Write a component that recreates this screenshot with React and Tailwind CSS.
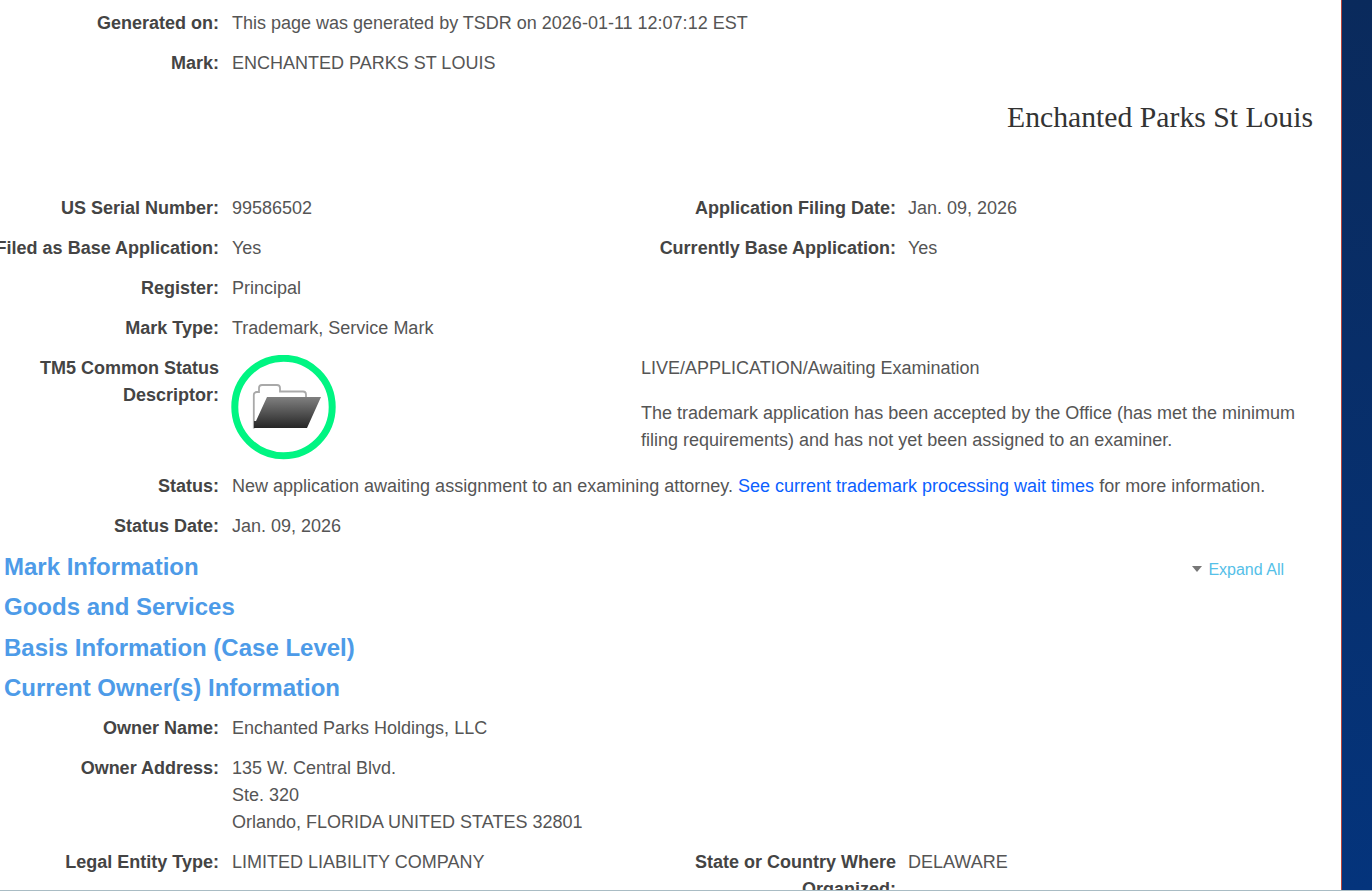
import React from 'react';

function Label({ children }) {
  return (
    <div className="w-[219px] shrink-0 flex justify-end text-right font-bold text-[#444444] whitespace-nowrap">
      <span>{children}</span>
    </div>
  );
}

function Row({ label, children, className = 'mb-[13px]' }) {
  return (
    <div className={`flex ${className}`}>
      <Label>{label}</Label>
      <div className="ml-[13px]">{children}</div>
    </div>
  );
}

function TwoCol({ label, value, label2, value2, wrap2 }) {
  return (
    <div className="flex mb-[13px]">
      <Label>{label}</Label>
      <div className="ml-[13px] w-[419px] shrink-0">{value}</div>
      <div className={`w-[245px] shrink-0 text-right font-bold text-[#444444] ${wrap2 ? '' : 'whitespace-nowrap'}`}>{label2}</div>
      <div className="ml-[12px]">{value2}</div>
    </div>
  );
}

function SectionTitle({ children, right }) {
  return (
    <div className="flex items-center justify-between h-[27px] mb-[13.33px] pl-1">
      <h2 className="text-[24px] font-bold text-[#4d9be8] leading-[27px]">{children}</h2>
      {right}
    </div>
  );
}

function StatusIcon() {
  return (
    <svg width="105" height="105" viewBox="0 0 105 105" className="block">
      <defs>
        <linearGradient id="folderFront" x1="0" y1="0" x2="0" y2="1">
          <stop offset="0" stopColor="#808080" />
          <stop offset="1" stopColor="#262626" />
        </linearGradient>
      </defs>
      <circle cx="52.5" cy="52" r="48.700" fill="none" stroke="#00f582" strokeWidth="7" />
      <path d="M22.800 73.500V40a3 3 0 0 1 3-3h2.200v-4a3 3 0 0 1 3-3h15a3 3 0 0 1 3 3v3.500h23a3 3 0 0 1 3 3V43" fill="none" stroke="#a9a9a9" strokeWidth="1.800" />
      <path d="M36 42h54L76 73H23v-7h2z" fill="url(#folderFront)" />
    </svg>
  );
}

export default function App() {
  return (
    <div className="w-[1372px] h-[891px] overflow-hidden bg-white border-b border-[#a9bcc4] font-['Liberation_Sans',Arial,sans-serif] text-[18px] leading-[27px] text-[#555555]">
      <div className="flex h-[890px]">
        <main className="w-[1341px] shrink-0 pt-[10px] overflow-hidden">
          <Row label="Generated on:">This page was generated by TSDR on 2026-01-11 12:07:12 EST</Row>
          <Row label="Mark:">ENCHANTED PARKS ST LOUIS</Row>

          <div className="h-[105px] flex justify-end pr-[28px]">
            <span className="font-['Liberation_Serif',serif] text-[29.700px] leading-[40px] mt-[7px] text-[#333333]">Enchanted Parks St Louis</span>
          </div>

          <TwoCol label="US Serial Number:" value="99586502" label2="Application Filing Date:" value2="Jan. 09, 2026" />
          <TwoCol label="Filed as Base Application:" value="Yes" label2="Currently Base Application:" value2="Yes" />
          <Row label="Register:">Principal</Row>
          <Row label="Mark Type:">Trademark, Service Mark</Row>

          <div className="flex h-[105px] mb-[13px]">
            <div className="w-[219px] shrink-0 text-right font-bold text-[#444444]">TM5 Common Status Descriptor:</div>
            <div className="ml-[12px] w-[410px] shrink-0">
              <StatusIcon />
            </div>
            <div className="w-[660px] shrink-0">
              <p className="mb-[18px]">LIVE/APPLICATION/Awaiting Examination</p>
              <p>The trademark application has been accepted by the Office (has met the minimum filing requirements) and has not yet been assigned to an examiner.</p>
            </div>
          </div>

          <Row label="Status:">
            New application awaiting assignment to an examining attorney.{' '}
            <a className="text-[#0b5fff]">See current trademark processing wait times</a> for more information.
          </Row>
          <Row label="Status Date:">Jan. 09, 2026</Row>

          <SectionTitle
            right={
              <div className="flex items-center gap-[6px] mr-[57px] mt-[5px] text-[16px] text-[#55c0e8]">
                <span className="w-0 h-0 border-x-[5.500px] border-x-transparent border-t-[6px] border-t-[#777777]" />
                <span>Expand All</span>
              </div>
            }
          >
            Mark Information
          </SectionTitle>
          <SectionTitle>Goods and Services</SectionTitle>
          <SectionTitle>Basis Information (Case Level)</SectionTitle>
          <SectionTitle>Current Owner(s) Information</SectionTitle>

          <div className="pt-[1px]">
            <Row label="Owner Name:">Enchanted Parks Holdings, LLC</Row>
            <Row label="Owner Address:">
              135 W. Central Blvd.<br />Ste. 320<br />Orlando, FLORIDA UNITED STATES 32801
            </Row>
            <TwoCol
              label="Legal Entity Type:"
              value="LIMITED LIABILITY COMPANY"
              label2="State or Country Where Organized:"
              value2="DELAWARE"
              wrap2
            />
          </div>
        </main>
        <aside className="w-[31px] shrink-0 border-l border-[#b5443c] bg-gradient-to-b from-[#0a2a5c] to-[#04347c]" />
      </div>
    </div>
  );
}
